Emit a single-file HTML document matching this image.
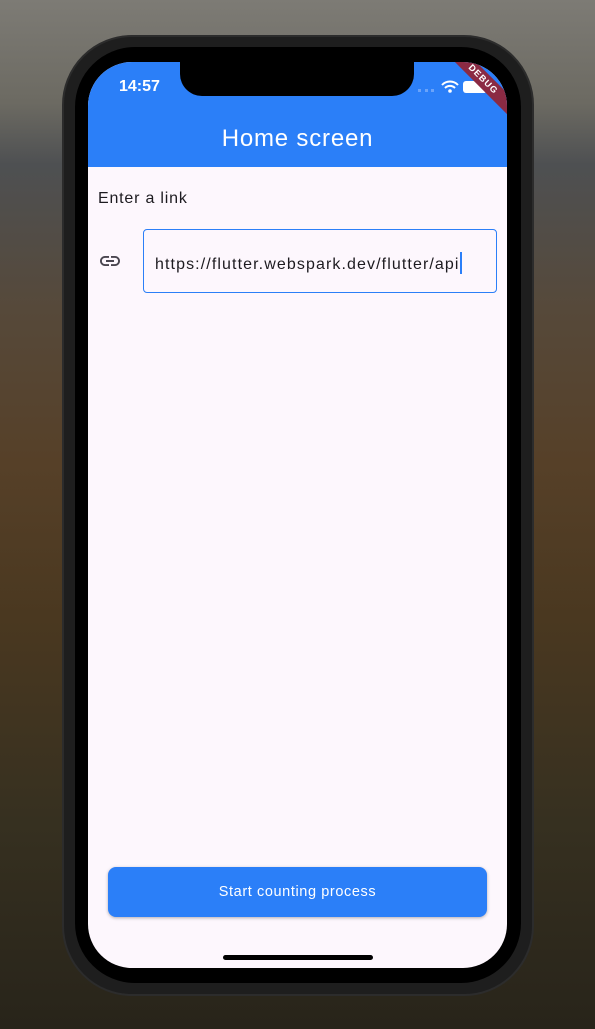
<!DOCTYPE html>
<html><head><style>
*{margin:0;padding:0;box-sizing:border-box}
body{width:595px;height:1029px;overflow:hidden;position:relative;font-family:"Liberation Sans",sans-serif;
background:linear-gradient(180deg,#7d7b75 0%,#6c6a62 10%,#4e5052 16%,#56493a 30%,#564028 45%,#4a3820 60%,#363020 80%,#28241a 100%);}
.phone{position:absolute;left:62px;top:35px;width:472px;height:961px;border-radius:70px;background:#1e1e1e;border:2px solid #2c2c2c}
.bezel{position:absolute;left:75px;top:47px;width:446px;height:936px;border-radius:60px;background:#000}
.screen{position:absolute;left:88px;top:62px;width:419px;height:906px;border-radius:44px;background:#fdf7fd;overflow:hidden}
.bar{position:absolute;left:0;top:0;width:419px;height:105px;background:#2b7ff8}
.notch{position:absolute;left:92px;top:0;width:234px;height:34px;background:#000;border-radius:0 0 22px 22px}
.time{position:absolute;left:31px;top:16px;color:#fff;font-size:16px;font-weight:bold}
.title{position:absolute;left:0;width:419px;top:63px;text-align:center;color:#fff;font-size:24px;letter-spacing:0.8px}
.btn{position:absolute;left:20px;top:805px;width:379px;height:50px;border-radius:8px;background:#2b7ff8;color:#fff;font-size:14.5px;letter-spacing:0.6px;text-align:center;line-height:50px;box-shadow:0 1px 3px rgba(0,0,0,.3)}
.home{position:absolute;left:135px;top:893px;width:150px;height:5px;border-radius:3px;background:#000}
.ribbon{position:absolute;right:-26px;top:10px;width:100px;height:15px;background:#8b2a43;transform:rotate(45deg);color:#fff;font-size:9px;font-weight:bold;text-align:center;line-height:15px;letter-spacing:1px}
</style></head><body>
<div class="phone"></div>
<div class="bezel"></div>
<div class="screen">
<div class="bar"></div>
<div class="notch"></div>
<div class="time">14:57</div>
<div style="position:absolute;left:330px;top:27px;width:16px;height:3px;border-top:3px dotted #6aa3fa"></div>
<svg style="position:absolute;left:353px;top:18px" width="18" height="13" viewBox="0 0 18 13"><path d="M1 5a11 11 0 0 1 16 0M4 8a7 7 0 0 1 10 0" stroke="#fff" stroke-width="2" fill="none"/><circle cx="9" cy="11" r="1.8" fill="#fff"/></svg>
<div style="position:absolute;left:375px;top:19px;width:24px;height:12px;border-radius:3px;background:#fff"></div>
<div class="ribbon">DEBUG</div>
<div class="title">Home screen</div>
<div style="position:absolute;left:10px;top:128px;font-size:16px;color:#1d1b20;letter-spacing:0.8px">Enter a link</div>
<svg style="position:absolute;left:10px;top:187px" width="24" height="24" viewBox="0 0 24 24"><path fill="#49454f" d="M3.9 12c0-1.71 1.39-3.1 3.1-3.1h4V7H7c-2.76 0-5 2.24-5 5s2.24 5 5 5h4v-1.9H7c-1.71 0-3.1-1.39-3.1-3.1zM8 13h8v-2H8v2zm9-6h-4v1.9h4c1.71 0 3.1 1.39 3.1 3.1s-1.39 3.1-3.1 3.1h-4V17h4c2.76 0 5-2.24 5-5s-2.24-5-5-5z"/></svg>
<div style="position:absolute;left:55px;top:167px;width:354px;height:64px;border:1.5px solid #2b7ff8;border-radius:4px"></div>
<div style="position:absolute;left:67px;top:190px;font-size:16px;color:#1d1b20;letter-spacing:1.1px">https://flutter.webspark.dev/flutter/api<span style="display:inline-block;width:2px;height:22px;background:#2b7ff8;vertical-align:-5px;margin-left:0"></span></div>
<div class="btn">Start counting process</div>
<div class="home"></div>
</div>
</body></html>
